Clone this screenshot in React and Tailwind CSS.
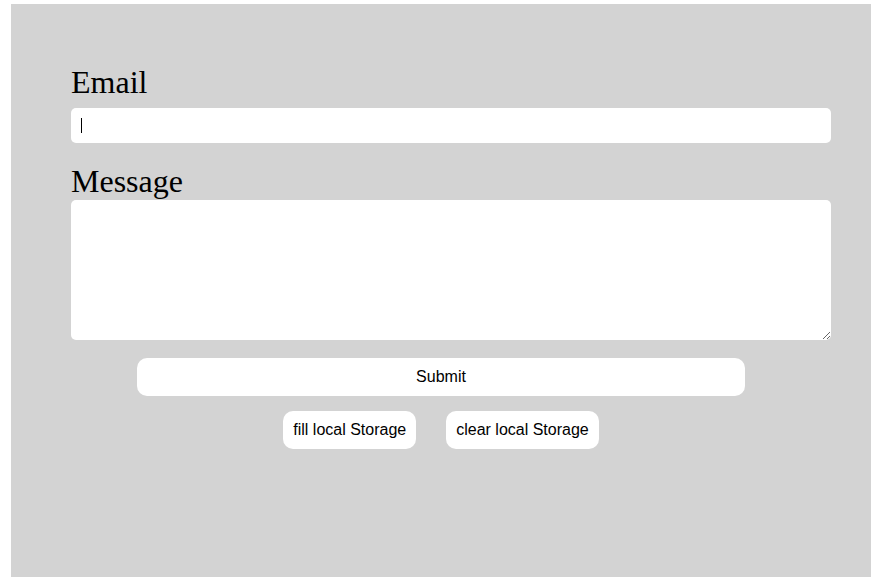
import React from 'react';

function App() {
    return (
        <div className="min-h-screen bg-white pt-[4px] pl-[11px]">
            <div className="w-[860px] h-[573px] bg-[#d3d3d3] pl-[60px] pr-[40px] pt-[60px] flex flex-col">
                <label className="text-[32px] leading-[37px] text-black font-['Liberation_Serif',serif]">
                    Email
                </label>
                <div className="relative mt-[7px]">
                    <input
                        type="text"
                        className="w-full h-[35px] bg-white rounded-[5px] px-[10px] outline-none border-0 font-['Liberation_Sans',sans-serif]"
                    />
                    <span className="absolute left-[10px] top-[10px] w-px h-[15px] bg-black"></span>
                </div>
                <label className="mt-[20px] text-[32px] leading-[37px] text-black font-['Liberation_Serif',serif]">
                    Message
                </label>
                <textarea className="w-full h-[140px] bg-white rounded-[5px] p-[10px] outline-none border-0 font-['Liberation_Sans',sans-serif]"></textarea>

                <div className="flex justify-center mt-[18px] pr-[20px]">
                    <button className="w-[608px] h-[38px] bg-white rounded-[10px] text-[16px] text-black font-['Liberation_Sans',sans-serif]">
                        Submit
                    </button>
                </div>

                <div className="flex justify-center gap-[30px] mt-[15px] pr-[20px]">
                    <button className="h-[38px] px-[10px] bg-white rounded-[10px] text-[16px] text-black font-['Liberation_Sans',sans-serif]">
                        fill local Storage
                    </button>
                    <button className="h-[38px] px-[10px] bg-white rounded-[10px] text-[16px] text-black font-['Liberation_Sans',sans-serif]">
                        clear local Storage
                    </button>
                </div>
            </div>
        </div>
    );
}

export default App;
